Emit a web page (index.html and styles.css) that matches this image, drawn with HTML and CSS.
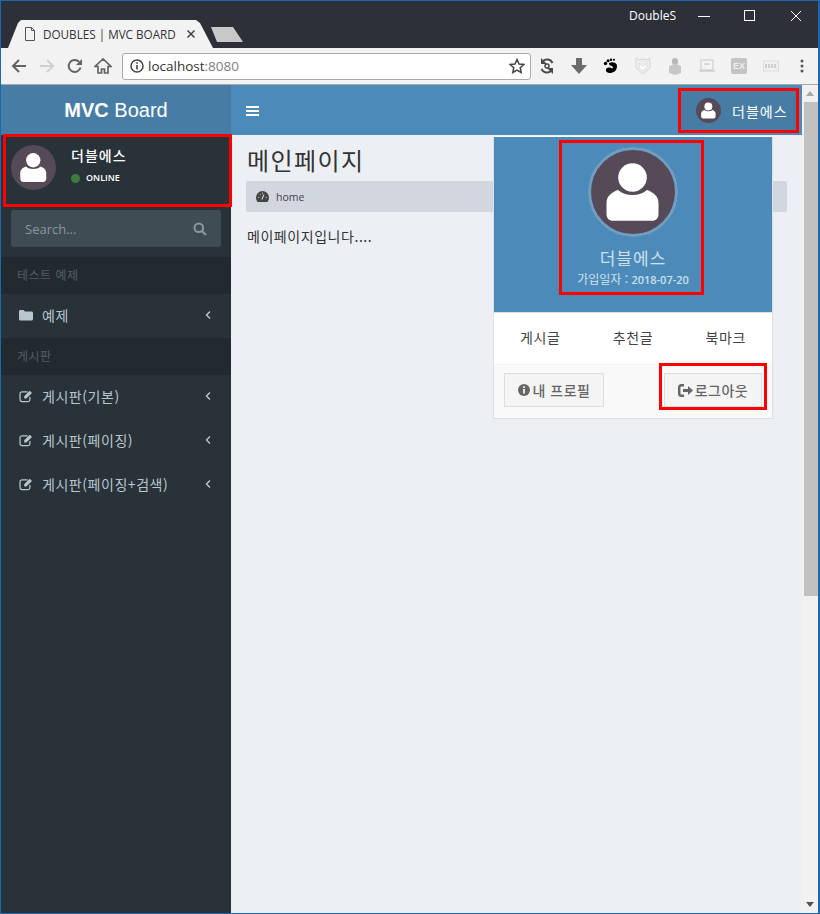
FILE: index.html
```html
<!DOCTYPE html>
<html lang="ko">
<head>
    <meta charset="UTF-8">
    <meta name="viewport" content="width=device-width, initial-scale=1.0">
    <title>DOUBLES | MVC BOARD</title>
    <link rel="stylesheet" href="styles.css">
</head>
<body>
<svg class="defs" width="0" height="0">
    <symbol id="person" viewBox="0 0 90 90">
        <circle cx="44.500" cy="30.500" r="14.300" fill="#fff"/>
        <path d="M30 43c-6 2-11.500 6-11.500 13v11c0 4 2.500 6.800 6.500 6.800h39c4 0 6.500-2.800 6.500-6.800V56c0-7-5.500-11-11.500-13-4 3.500-8.500 5-14.500 5s-10.500-1.500-14.500-5z" fill="#fff"/>
    </symbol>
    <symbol id="edit" viewBox="0 1 13.500 12">
        <path d="M10.500 8v2.600A1.900 1.900 0 0 1 8.600 12.400H2.900A1.900 1.900 0 0 1 1 10.500V4.900A1.900 1.900 0 0 1 2.900 3h5.500" fill="none" stroke="currentColor" stroke-width="1.200"/>
        <path d="M5 9.400V7.300l5.400-5.400 2.100 2.100-5.400 5.400z" fill="currentColor"/>
    </symbol>
    <symbol id="angle" viewBox="0 0 6 10">
        <path d="M5 1.500 1.500 5 5 8.500" fill="none" stroke="currentColor" stroke-width="1.400"/>
    </symbol>
</svg>

<div class="window">
    <div class="titlebar">
        <div class="title-row">
            <span class="account">DoubleS</span>
            <span class="win-btn"><svg width="12" height="12" viewBox="0 0 12 12"><path d="M0 6.500h12" stroke="#fff"/></svg></span>
            <span class="win-btn"><svg width="12" height="12" viewBox="0 0 12 12"><rect x=".5" y=".5" width="10" height="10" fill="none" stroke="#fff"/></svg></span>
            <span class="win-btn"><svg width="12" height="12" viewBox="0 0 12 12"><path d="M1 1l10 10M11 1 1 11" stroke="#fff" fill="none"/></svg></span>
        </div>
        <div class="tab-row">
            <div class="tab">
                <svg width="12" height="14" viewBox="0 0 12 14"><path d="M1.500.500h6l3 3v10h-9zM7.500.500v3h3" fill="#f2f2f2" stroke="#555"/></svg>
                <span class="tab-title">DOUBLES | MVC BOARD</span>
                <svg width="10" height="10" viewBox="0 0 10 10"><path d="M1.500 1.500l7 7M8.500 1.500l-7 7" stroke="#444" stroke-width="1.500"/></svg>
            </div>
            <div class="new-tab"></div>
        </div>
    </div>

    <div class="toolbar">
        <span class="nav-btn"><svg width="16" height="16" viewBox="0 0 16 16"><path d="M15 8H2M8 2 2 8l6 6" fill="none" stroke="#5f6368" stroke-width="2"/></svg></span>
        <span class="nav-btn"><svg width="16" height="16" viewBox="0 0 16 16"><path d="M1 8h13M8 2l6 6-6 6" fill="none" stroke="#d0d0d0" stroke-width="2"/></svg></span>
        <span class="nav-btn"><svg width="16" height="16" viewBox="0 0 16 16"><path d="M13.500 9.500A6 6 0 1 1 12 3.800" fill="none" stroke="#5f6368" stroke-width="2"/><path d="M15 1v6H9z" fill="#5f6368"/></svg></span>
        <span class="nav-btn"><svg width="18" height="18" viewBox="0 0 18 18"><path d="M9 2 1 9.500h3V16h3.500v-4h3v4H14V9.500h3z" fill="none" stroke="#5f6368" stroke-width="1.700"/></svg></span>
        <div class="address">
            <svg width="14" height="14" viewBox="0 0 14 14"><circle cx="7" cy="7" r="6" fill="none" stroke="#444" stroke-width="1.500"/><path d="M7 6v4.500M7 3.200v1.600" stroke="#444" stroke-width="1.600"/></svg>
            <span class="url">localhost<span class="port">:8080</span></span>
            <svg width="16" height="16" viewBox="0 0 16 16"><path d="M8 1.500l2 4.500 4.800.5-3.600 3.200 1 4.800L8 12l-4.200 2.500 1-4.800L1.200 6.500 6 6z" fill="none" stroke="#444" stroke-width="1.500"/></svg>
        </div>
        <div class="extensions">
            <span class="ext"><svg width="16" height="18" viewBox="0 0 16 18"><path d="M13.500 6A6 6 0 0 0 4 4M2.500 12A6 6 0 0 0 12 14" fill="none" stroke="#4a4a4a" stroke-width="2"/><path d="M2 1v6h6zM14 17v-6H8z" fill="#4a4a4a"/><circle cx="8" cy="9" r="2" fill="none" stroke="#4a4a4a" stroke-width="1.500"/></svg></span>
            <span class="ext"><svg width="18" height="18" viewBox="0 0 18 18"><path d="M6 1h6v7h5l-8 9-8-9h5z" fill="#6b6b6b"/></svg></span>
            <span class="ext"><svg width="16" height="16" viewBox="0 0 16 16"><path d="M6 5c3-1.500 8-1 8 3 0 5-4 7-7 7-3 0-4.500-1.500-4-3.500.5-2 3.500-2.500 5-1.500 1.500 1 2.500-.5 1.500-1.500C8.500 7.500 6 8 6 5z" fill="#000"/><circle cx="2.500" cy="5.500" r="1.700"/><circle cx="5" cy="2.800" r="1.500"/><circle cx="8" cy="1.800" r="1.300"/><circle cx="11" cy="1.800" r="1"/></svg></span>
            <span class="ext"><svg width="16" height="18" viewBox="0 0 16 18"><path d="M1 1l3 2 4-1 4 1 3-2v10l-7 6-7-6z" fill="#eee" stroke="#d5d5d5"/><path d="M4 6l4 3 4-3v5l-4 3-4-3z" fill="#f8f8f8" stroke="#ddd"/></svg></span>
            <span class="ext"><svg width="14" height="18" viewBox="0 0 14 18"><rect x="4" y="1" width="6" height="7" rx="3" fill="#b8b8b8"/><path d="M1 9l6-2 6 2v7l-6 2-6-2z" fill="#c6c6c6"/></svg></span>
            <span class="ext"><svg width="16" height="14" viewBox="0 0 16 14"><rect x="2" y="1" width="12" height="10" fill="#f4f4f4" stroke="#c8c8c8"/><path d="M5 5h6M0 12h16" stroke="#c0c0c0"/></svg></span>
            <span class="ext"><span class="ext-ex">EX</span></span>
            <span class="ext"><svg width="16" height="14" viewBox="0 0 16 14"><rect x=".5" y="2" width="15" height="10" fill="#f0f0f0" stroke="#ddd"/><path d="M3 5v4M6 5v4M9 5v4M12 5v4" stroke="#c4c4c4" stroke-width="1.500"/></svg></span>
            <span class="ext"><svg width="4" height="14" viewBox="0 0 4 14"><circle cx="2" cy="2" r="1.500" fill="#555"/><circle cx="2" cy="7" r="1.500" fill="#555"/><circle cx="2" cy="12" r="1.500" fill="#555"/></svg></span>
        </div>
    </div>

    <div class="viewport">
        <div class="page">
            <header class="main-header">
                <a class="logo"><b>MVC</b> Board</a>
                <div class="navbar">
                    <span class="toggle"><i></i><i></i><i></i></span>
                    <a class="user-menu">
                        <svg class="avatar avatar-sm"><use href="#person"/></svg>
                        <span>더블에스</span>
                        <span class="mark"></span>
                    </a>
                </div>
            </header>

            <div class="body-row">
                <aside class="sidebar">
                    <div class="user-panel">
                        <svg class="avatar avatar-md"><use href="#person"/></svg>
                        <div class="user-info">
                            <p class="user-name">더블에스</p>
                            <p class="user-status"><i class="dot"></i>ONLINE</p>
                        </div>
                        <span class="mark"></span>
                    </div>
                    <div class="search">
                        <span>Search...</span>
                        <svg width="14" height="14" viewBox="0 0 14 14"><circle cx="5.800" cy="5.800" r="4.300" fill="none" stroke="#8e979c" stroke-width="2"/><path d="M9 9l4 4" stroke="#8e979c" stroke-width="2.200"/></svg>
                    </div>
                    <ul class="menu">
                        <li class="menu-header">테스트 예제</li>
                        <li class="menu-item">
                            <svg class="menu-icon" viewBox="0 0 14 14"><path d="M0 3.500C0 2.600.6 2 1.500 2h3L6 3.500h6.500c.9 0 1.500.6 1.500 1.500v6c0 .9-.6 1.500-1.500 1.500h-11C.6 12.500 0 11.900 0 11z" fill="currentColor"/></svg>
                            <span>예제</span>
                            <svg class="menu-angle"><use href="#angle"/></svg>
                        </li>
                        <li class="menu-header">게시판</li>
                        <li class="menu-item">
                            <svg class="menu-icon"><use href="#edit"/></svg>
                            <span>게시판(기본)</span>
                            <svg class="menu-angle"><use href="#angle"/></svg>
                        </li>
                        <li class="menu-item">
                            <svg class="menu-icon"><use href="#edit"/></svg>
                            <span>게시판(페이징)</span>
                            <svg class="menu-angle"><use href="#angle"/></svg>
                        </li>
                        <li class="menu-item">
                            <svg class="menu-icon"><use href="#edit"/></svg>
                            <span>게시판(페이징+검색)</span>
                            <svg class="menu-angle"><use href="#angle"/></svg>
                        </li>
                    </ul>
                </aside>

                <main class="content">
                    <h1 class="page-title">메인페이지</h1>
                    <div class="breadcrumb">
                        <svg width="13" height="11" viewBox="0 0 13 11"><path d="M6.500 0A6.500 6.500 0 0 0 0 6.500c0 1.700.6 3.200 1.600 4.500h9.800c1-1.300 1.600-2.800 1.600-4.500A6.500 6.500 0 0 0 6.500 0z" fill="#444"/><path d="M5.800 8.500 8 3.500M2.300 6.500h1M9.700 6.500h1M4 3.300l.6.7M6.500 1.800v1" stroke="#d2d6de" stroke-width="1.100"/></svg>
                        <span>home</span>
                    </div>
                    <p class="content-text">메이페이지입니다....</p>
                </main>
            </div>

            <div class="dropdown">
                <div class="dropdown-head">
                    <svg class="avatar avatar-lg"><use href="#person"/></svg>
                    <p class="head-name">더블에스</p>
                    <p class="head-date">가입일자 : <span>2018-07-20</span></p>
                    <span class="mark"></span>
                </div>
                <div class="dropdown-links">
                    <a>게시글</a>
                    <a>추천글</a>
                    <a>북마크</a>
                </div>
                <div class="dropdown-foot">
                    <a class="btn">
                        <svg width="12" height="12" viewBox="0 0 12 12"><circle cx="6" cy="6" r="6" fill="#666"/><path d="M6 5v4.500M6 2.200V4" stroke="#f4f4f4" stroke-width="1.800"/></svg>
                        내 프로필
                    </a>
                    <a class="btn btn-logout">
                        <svg width="15" height="13" viewBox="0 0 15 13"><path d="M6 1.200H3.500a2.300 2.300 0 0 0-2.300 2.300v6a2.300 2.300 0 0 0 2.300 2.300H6" fill="none" stroke="#666" stroke-width="2.400"/><path d="M5 5h5V2l5 4.500L10 11V8H5z" fill="#666"/></svg>
                        로그아웃
                        <span class="mark"></span>
                    </a>
                </div>
            </div>
        </div>

        <div class="scrollbar">
            <svg width="8" height="5" viewBox="0 0 8 5"><path d="M4 0l4 5H0z" fill="#a8a8a8"/></svg>
            <div class="thumb"></div>
            <svg class="arrow-down" width="8" height="5" viewBox="0 0 8 5"><path d="M0 0h8L4 5z" fill="#505050"/></svg>
        </div>
    </div>
</div>
</body>
</html>
```

FILE: styles.css
```css
* {
    box-sizing: border-box;
}

html, body {
    margin: 0;
    padding: 0;
}

p, ul, h1 {
    margin: 0;
    padding: 0;
}

body {
    font-family: "Noto Sans CJK KR", "Noto Sans", sans-serif;
    font-size: 14px;
    color: #333;
}

.defs {
    position: absolute;
}

.window {
    width: 820px;
    height: 914px;
    display: flex;
    flex-direction: column;
    overflow: hidden;
    border: solid #1d69b1;
    border-width: 1px 2px 1px 1px;
}

/* browser chrome */
.titlebar {
    height: 47px;
    background-color: #2d3039;
    display: flex;
    flex-direction: column;
}

.title-row {
    height: 19px;
    display: flex;
    justify-content: flex-end;
    align-items: center;
    padding-top: 10px;
    margin-right: -1px;
}

.account {
    font-family: "Open Sans", sans-serif;
    font-size: 12px;
    color: #fff;
    margin-right: 5px;
}

.win-btn {
    width: 46px;
    display: flex;
    justify-content: center;
}

.tab-row {
    flex: 1;
    display: flex;
    align-items: flex-end;
    padding-left: 7px;
}

.tab {
    width: 205px;
    height: 28px;
    background-color: #f2f2f2;
    clip-path: polygon(0 100%, 10px 3px, 13px 0, 188px 0, 192px 3px, 205px 100%);
    display: flex;
    align-items: center;
    padding: 0 17px 0 16px;
}

.tab-title {
    flex: 1;
    font-family: "Open Sans", sans-serif;
    font-size: 11.7px;
    color: #333;
    margin-left: 7px;
    white-space: nowrap;
}

.new-tab {
    width: 32px;
    height: 15px;
    margin: 0 0 6px -2px;
    background-color: #c8c8c8;
    clip-path: polygon(0 0, 22px 0, 32px 100%, 6px 100%);
}

.toolbar {
    height: 37px;
    background-color: #f2f2f2;
    border-bottom: 1px solid #a8a8a8;
    display: flex;
    align-items: center;
    padding-left: 4px;
}

.nav-btn {
    width: 28px;
    display: flex;
    justify-content: center;
}

.address {
    width: 409px;
    height: 27px;
    margin-left: 5px;
    background-color: #fff;
    border: 1px solid #a9a9a9;
    border-radius: 3px;
    display: flex;
    align-items: center;
    padding: 0 5px 0 7px;
}

.url {
    flex: 1;
    margin-left: 4px;
    font-family: "Open Sans", sans-serif;
    font-size: 13.5px;
    color: #333;
}

.port {
    color: #808080;
}

.extensions {
    display: flex;
}

.ext {
    width: 32px;
    display: flex;
    justify-content: center;
    align-items: center;
}

.ext:last-child {
    width: 30px;
}

.ext-ex {
    width: 16px;
    height: 16px;
    background-color: #c4c4c4;
    border-radius: 2px;
    color: #eee;
    font-family: "Liberation Sans", sans-serif;
    font-size: 9px;
    font-weight: bold;
    line-height: 16px;
    text-align: center;
}

.viewport {
    flex: 1;
    display: flex;
    min-height: 0;
}

.page {
    position: relative;
    flex: 1;
    display: flex;
    flex-direction: column;
    min-width: 0;
}

/* header */
.main-header {
    height: 50px;
    display: flex;
    color: #fff;
}

.logo {
    width: 230px;
    background-color: #477da5;
    font-family: "Liberation Sans", sans-serif;
    font-size: 20px;
    line-height: 50px;
    text-align: center;
}

.navbar {
    flex: 1;
    background-color: #4c8bb9;
    display: flex;
    justify-content: space-between;
    align-items: center;
    padding: 3px 3px 2px 15px;
}

.toggle {
    width: 13px;
    display: flex;
    flex-direction: column;
    gap: 2px;
}

.toggle i {
    display: block;
    height: 2px;
    background-color: #fff;
}

.user-menu {
    position: relative;
    width: 121px;
    height: 45px;
    background-color: #477da5;
    display: flex;
    align-items: center;
    gap: 11px;
    padding-left: 18px;
    font-size: 14px;
    letter-spacing: 1px;
}

.mark {
    position: absolute;
    inset: 0;
    border: 3px solid #f00;
    z-index: 5;
}

.avatar {
    display: block;
    flex: none;
    border-radius: 50%;
    background-color: #564a58;
}

.avatar-sm {
    width: 25px;
    height: 25px;
}

.avatar-md {
    width: 45px;
    height: 45px;
}

.avatar-lg {
    width: 90px;
    height: 90px;
    outline: 3px solid #6d9fc5;
    outline-offset: -3px;
}

/* sidebar */
.body-row {
    flex: 1;
    display: flex;
    min-height: 0;
}

.sidebar {
    width: 230px;
    background-color: #293239;
}

.user-panel {
    position: relative;
    height: 72px;
    display: flex;
    padding: 10px 10px 0;
    gap: 15px;
}

.user-panel .mark {
    inset: -1px -1px 0 2px;
}

.user-name {
    margin-top: 2px;
    font-size: 14px;
    font-weight: 500;
    line-height: 16px;
    letter-spacing: 1px;
    color: #fff;
}

.user-status {
    margin-top: 8px;
    display: flex;
    align-items: center;
    font-family: "Open Sans", sans-serif;
    font-size: 9px;
    font-weight: 600;
    line-height: 14px;
    color: #fff;
}

.dot {
    width: 9px;
    height: 9px;
    margin-right: 6px;
    border-radius: 50%;
    background-color: #3f7a3e;
}

.search {
    height: 37px;
    margin: 3px 10px 10px;
    padding: 0 14px;
    background-color: #3e4c54;
    border-radius: 3px;
    display: flex;
    justify-content: space-between;
    align-items: center;
    font-family: "Open Sans", sans-serif;
    font-size: 13px;
    color: #8e979c;
}

.menu {
    list-style: none;
}

.menu-header {
    height: 37px;
    padding-left: 16px;
    background-color: #232a2f;
    color: #4f6063;
    font-size: 12px;
    line-height: 36px;
    letter-spacing: .5px;
}

.menu-item {
    height: 44px;
    display: flex;
    align-items: center;
    padding: 0 20px 2px 18px;
    color: #b8c7ce;
    font-size: 14px;
    letter-spacing: .55px;
}

.menu-item span {
    flex: 1;
    margin-left: 9px;
}

.menu-icon {
    width: 14px;
    height: 14px;
    flex: none;
}

.menu-angle {
    width: 6px;
    height: 10px;
    flex: none;
}

/* content */
.content {
    flex: 1;
    background-color: #ecf0f5;
    padding: 10px 15px 0;
}

.page-title {
    font-size: 24px;
    font-weight: 400;
    line-height: 30px;
    padding-bottom: 6px;
    margin-left: 1px;
    letter-spacing: 1.4px;
}

.breadcrumb {
    height: 31px;
    width: 541px;
    background-color: #d2d6de;
    border-radius: 2px;
    display: flex;
    align-items: center;
    gap: 7px;
    padding-left: 10px;
    font-family: "Open Sans", sans-serif;
    font-size: 10.5px;
    color: #444;
}

.content-text {
    margin: 14px 0 0 1px;
    font-size: 14px;
    line-height: 20px;
    letter-spacing: .55px;
}

/* user dropdown */
.dropdown {
    position: absolute;
    top: 51px;
    left: 492px;
    width: 280px;
    height: 283px;
    background-color: #fff;
    border: 1px solid #dcdfe4;
    border-top-color: #fff;
    z-index: 3;
}

.dropdown-head {
    position: relative;
    height: 175px;
    background-color: #4c8bb9;
    display: flex;
    flex-direction: column;
    align-items: center;
    padding-top: 10px;
}

.dropdown-head .mark {
    inset: 3px 68px 17px 65px;
}

.head-name {
    margin-top: 9px;
    font-size: 17px;
    line-height: 24px;
    letter-spacing: 1px;
    color: #cfe0ed;
}

.head-date {
    font-size: 12px;
    line-height: 18px;
    color: #cfe0ed;
}

.head-date span {
    font-family: "Open Sans", sans-serif;
    font-size: 11px;
    font-weight: 600;
}

.dropdown-links {
    height: 51px;
    display: grid;
    grid-template-columns: repeat(3, 1fr);
    align-items: center;
    justify-items: center;
    padding-bottom: 3px;
    font-size: 14px;
    letter-spacing: .6px;
    color: #444;
    border-top: 1px solid #dcdfe4;
}

.dropdown-foot {
    height: 55px;
    background-color: #f9f9f9;
    display: flex;
    justify-content: space-between;
    padding: 10px 10px 0;
}

.btn {
    position: relative;
    height: 34px;
    width: 100px;
    background-color: #f4f4f4;
    border: 1px solid #ddd;
    display: flex;
    justify-content: center;
    align-items: center;
    gap: 3px;
    font-size: 14px;
    font-weight: 500;
    letter-spacing: .5px;
    color: #666;
}

.btn-logout {
    width: 98px;
    gap: 2px;
}

.btn-logout .mark {
    inset: -11px -6px -4px -6px;
}

/* scrollbar */
.scrollbar {
    width: 16px;
    flex: none;
    background-color: #f1f1f1;
    display: flex;
    flex-direction: column;
    align-items: center;
    padding-top: 6px;
}

.thumb {
    width: 14px;
    height: 494px;
    margin: 6px 0 0 2px;
    background-color: #c1c1c1;
}

.arrow-down {
    margin-top: auto;
    margin-bottom: 6px;
}
```
